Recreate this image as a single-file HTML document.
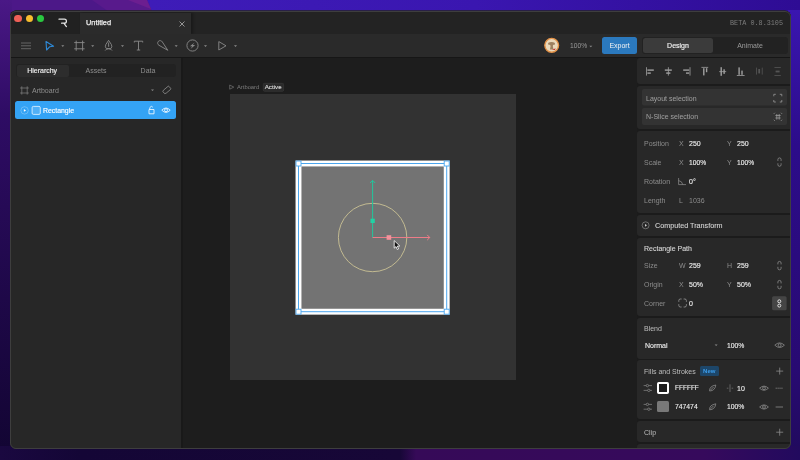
<!DOCTYPE html>
<html><head><meta charset="utf-8">
<style>
*{margin:0;padding:0;box-sizing:border-box}
html,body{width:800px;height:460px;overflow:hidden}
body{font-family:"Liberation Sans",sans-serif;font-size:7px;color:#d8d8d8;position:relative;background:#2a0c6a}
.a{position:absolute}
#wp{position:absolute;left:0;top:0;width:800px;height:460px}
#win{position:absolute;left:0;top:0;width:800px;height:460px;clip-path:inset(10.5px 9.2px 11.3px 10px round 6px)}
#rim{position:absolute;left:10px;top:10.5px;width:780.8px;height:438.2px;border-radius:6px;border:0.8px solid #3e3e3e;pointer-events:none}
.t{position:absolute;white-space:nowrap;line-height:1;will-change:transform}
.lbl{color:#8c8c8c}
.val{color:#f2f2f2;-webkit-text-stroke:0.1px #f2f2f2}
.md{-webkit-text-stroke:0.25px currentColor}
svg.i{position:absolute;overflow:visible}
</style></head><body>
<svg id="wp" width="800" height="460" viewBox="0 0 800 460">
<defs>
<linearGradient id="gl" x1="0" y1="0" x2="0" y2="1">
<stop offset="0" stop-color="#4a1886"/><stop offset="0.25" stop-color="#2e0c64"/><stop offset="0.65" stop-color="#1e0848"/><stop offset="1" stop-color="#120532"/>
</linearGradient>
<linearGradient id="gr" x1="0" y1="0" x2="0" y2="1">
<stop offset="0" stop-color="#3a16b0"/><stop offset="0.3" stop-color="#2c0c8a"/><stop offset="0.8" stop-color="#280a72"/><stop offset="1" stop-color="#200a5c"/>
</linearGradient>
<linearGradient id="gb" x1="0" y1="0" x2="1" y2="0">
<stop offset="0" stop-color="#1a0840"/><stop offset="0.1" stop-color="#140636"/><stop offset="0.5" stop-color="#170737"/><stop offset="0.52" stop-color="#360a58"/><stop offset="0.88" stop-color="#360a5c"/><stop offset="1" stop-color="#220a5e"/>
</linearGradient>
<linearGradient id="gt" x1="0" y1="0" x2="1" y2="0">
<stop offset="0" stop-color="#4c1888"/><stop offset="0.12" stop-color="#521890"/><stop offset="0.17" stop-color="#6a1c8c"/><stop offset="0.185" stop-color="#4a1cb0"/><stop offset="0.3" stop-color="#3c16b4"/><stop offset="1" stop-color="#3a14a8"/>
</linearGradient>
<linearGradient id="gtr" x1="0" y1="0" x2="1" y2="0"><stop offset="0" stop-color="#3e1cb8"/><stop offset="0.5" stop-color="#3a16b0"/><stop offset="1" stop-color="#2e0c94"/></linearGradient>
</defs>
<rect width="800" height="460" fill="#2c0c80"/>
<rect x="0" y="0" width="800" height="14" fill="#3c1ab4"/>
<rect x="150" y="0" width="650" height="14" fill="url(#gtr)"/>
<polygon points="0,0 147,0 153,14 0,14" fill="#4c1888"/>
<polygon points="92,0 147,0 153,14 112,14" fill="#581a8c"/>
<polygon points="128,0 147,0 151,9" fill="#6c1e90"/>
<rect x="0" y="0" width="12" height="460" fill="url(#gl)"/>
<rect x="788" y="10" width="12" height="450" fill="url(#gr)"/>
<rect x="0" y="446" width="800" height="14" fill="url(#gb)"/>
</svg>
<div id="win">
 <div class="a" style="left:0;top:0;width:800px;height:460px;background:#262626"></div>
 <!-- title bar -->
 <div class="a" style="left:10px;top:10px;width:781px;height:23.5px;background:#232323"></div>
 <div class="a" style="left:10px;top:10px;width:70px;height:23.5px;background:#212121"></div>
 <div class="a" style="left:79.7px;top:12.8px;width:111.5px;height:21.2px;background:#2b2b2b;box-shadow:1.5px 0 2px #1a1a1a"></div>
 <div class="a" style="left:14.3px;top:14.8px;width:7.6px;height:7.6px;border-radius:50%;background:#ee5f57"></div>
 <div class="a" style="left:25.5px;top:14.8px;width:7.6px;height:7.6px;border-radius:50%;background:#f7bd2e"></div>
 <div class="a" style="left:36.7px;top:14.8px;width:7.6px;height:7.6px;border-radius:50%;background:#2ac840"></div>
 <!-- R logo -->
 <svg class="i" style="left:58px;top:18px" width="10" height="10" viewBox="0 0 10 10"><path d="M1 1.2 H6.4 A2 2 0 0 1 6.4 5.2 H3.6 M5.8 5.2 L8.4 8.6" fill="none" stroke="#e4e4e4" stroke-width="1.25" stroke-linecap="round" stroke-linejoin="round"/></svg>
 <div class="t md" style="left:85.7px;top:19.2px;font-size:7.4px;color:#ededed">Untitled</div>
 <svg class="i" style="left:178.5px;top:20.5px" width="6" height="6" viewBox="0 0 6 6"><path d="M0.5 0.5 L5.5 5.5 M5.5 0.5 L0.5 5.5" stroke="#a0a0a0" stroke-width="0.9"/></svg>
 <div class="t" style="left:730px;top:19.5px;font-family:'Liberation Mono',monospace;font-size:6.8px;color:#7c7c7c">BETA 0.8.3105</div>
 <!-- toolbar -->
 <div class="a" style="left:10px;top:33.5px;width:781px;height:23px;background:#2a2a2a"></div>
 <div class="a" style="left:10px;top:56.8px;width:781px;height:1.6px;background:#161616"></div>

 <!-- toolbar icons -->
 <svg class="i" style="left:0;top:0" width="800" height="60" viewBox="0 0 800 60">
  <g stroke="#8a8a8a" stroke-width="0.9" fill="none">
   <path d="M21 43 H31 M21 45.8 H31 M21 48.7 H31" stroke="#7a7a7a" stroke-width="0.75"/>
   <path d="M76.2 40.6 V50.8 M82.6 40.6 V50.8 M74.2 42.6 H84.6 M74.2 48.8 H84.6"/>
   <path d="M108.6 40.3 L111.4 44.6 Q112.6 47 110.8 48.6 H106.4 Q104.6 47 105.8 44.6 Z M108.6 42.6 V45.6 M105.2 50.5 Q106 48.8 108.6 48.8 Q111.2 48.8 112 50.5"/><circle cx="108.6" cy="46" r="0.7" fill="#8a8a8a" stroke="none"/>
   <path d="M134.3 42.5 V41.2 H142.7 V42.5 M138.5 41.2 V50 M136.8 50 H140.2"/>
   <path d="M158.4 41.3 A2.5 2.5 0 0 1 162.3 41.9 L167.8 50.3 L159 45.3 A2.5 2.5 0 0 1 158.4 41.3 Z"/>
   <circle cx="192.5" cy="45.5" r="5.6"/>
   <path d="M218.8 41.6 L226 45.8 L218.8 50 Z"/>
  </g>
  <path d="M194.6 42.6 L189.9 46.3 H192.3 L190.5 48.9 L195.2 45.1 H192.7 Z" fill="#8a8a8a"/>
  <path d="M46 41.5 L53.6 46.2 L49.6 46.8 L46.6 50 Z" fill="none" stroke="#2e8ad8" stroke-width="1.1" stroke-linejoin="round"/>
  <g fill="#8a8a8a">
   <path d="M61.3 45.3 H64.3 L62.8 47 Z"/>
   <path d="M91.2 45.3 H94.2 L92.7 47 Z"/>
   <path d="M121 45.3 H124 L122.5 47 Z"/>
   <path d="M174.7 45.3 H177.7 L176.2 47 Z"/>
   <path d="M204 45.3 H207 L205.5 47 Z"/>
   <path d="M234 45.3 H237 L235.5 47 Z"/>
  </g>
 </svg>

 <!-- toolbar right -->
 <svg class="i" style="left:543px;top:37px" width="17" height="17" viewBox="0 0 17 17">
  <circle cx="8.7" cy="8.3" r="6.9" fill="#ead9bb" stroke="#e39248" stroke-width="1.4"/>
  <path d="M5 6 Q8.5 4 12 6 L11.5 8 Q10 7 9.8 9 L10.5 12.5 H7 L7.6 9 Q7 7 5.6 8 Z" fill="#8a6a4a" opacity="0.8"/>
  <path d="M9 13 L12.5 11.3 L12 13 Z" fill="#c03030"/>
 </svg>
 <div class="t" style="left:569.5px;top:42.8px;color:#9a9a9a;font-size:6.7px">100%</div>
 <svg class="i" style="left:589px;top:44.5px" width="4" height="3" viewBox="0 0 4 3"><path d="M0.3 0.8 H3.3 L1.8 2.3 Z" fill="#8a8a8a"/></svg>
 <div class="a" style="left:602px;top:37px;width:35px;height:16.5px;border-radius:2.5px;background:#2b79be"></div>
 <div class="t" style="left:602px;top:41.5px;width:35px;text-align:center;color:#f2f2f2">Export</div>
 <div class="a" style="left:642px;top:37px;width:146px;height:16.5px;border-radius:3px;background:#222"></div>
 <div class="a" style="left:643px;top:38px;width:70px;height:14.5px;border-radius:2.5px;background:#3b3b3b"></div>
 <div class="t" style="left:643px;top:41.5px;width:70px;text-align:center;color:#f0f0f0;-webkit-text-stroke:0.15px #f0f0f0">Design</div>
 <div class="t" style="left:714px;top:41.5px;width:72px;text-align:center;color:#9a9a9a">Animate</div>
 <!-- body -->
 <div class="a" style="left:10px;top:58.4px;width:171px;height:392px;background:#272727"></div>
 <div class="a" style="left:180.8px;top:58.4px;width:1.9px;height:392px;background:#191919"></div>
 <div class="a" style="left:182.7px;top:58.4px;width:455px;height:392px;background:#1d1d1d"></div>
 <div class="a" style="left:637px;top:58.4px;width:153px;height:392px;background:#1b1b1b"></div>


 <!-- canvas -->
 <div class="a" style="left:230px;top:94px;width:286px;height:286px;background:#323232"></div>
 <svg class="i" style="left:0;top:0" width="800" height="460" viewBox="0 0 800 460">
  <path d="M229.7 85 L233.8 87.1 L229.7 89.2 Z" fill="none" stroke="#7a7a7a" stroke-width="0.65" stroke-linejoin="round"/>
  <rect x="263.3" y="83.3" width="20.3" height="8" rx="1.2" fill="#2a2a2a" stroke="#3c3c3c" stroke-width="0.6"/>
  <rect x="298.5" y="163.5" width="148.2" height="148.2" fill="#737373" stroke="#ffffff" stroke-width="5.9"/>
  <rect x="298.5" y="163.5" width="148.2" height="148.2" fill="none" stroke="#4ba6ee" stroke-width="1"/>
  <g fill="#ffffff" stroke="#4ba6ee" stroke-width="0.9">
   <rect x="296" y="161" width="5" height="5"/>
   <rect x="444.2" y="161" width="5" height="5"/>
   <rect x="296" y="309.2" width="5" height="5"/>
   <rect x="444.2" y="309.2" width="5" height="5"/>
  </g>
  <circle cx="372.6" cy="237.5" r="34.2" fill="none" stroke="#d6cb98" stroke-width="0.8"/>
  <path d="M372.6 237.5 V180.5 M370 183 L372.6 180.4 L375.2 183" fill="none" stroke="#22c69c" stroke-width="1"/>
  <rect x="370.5" y="218.7" width="4.3" height="4.3" fill="#22d2a4"/>
  <path d="M372.6 237.5 H429.8 M427.2 234.9 L429.8 237.5 L427.2 240.1" fill="none" stroke="#ee7c88" stroke-width="1"/>
  <rect x="386.6" y="235.2" width="4.6" height="4.6" fill="#f4929c"/>
  <path d="M394.2 240.6 L394.2 248.2 L396 246.6 L397.3 249.5 L398.6 248.9 L397.3 246.1 L399.8 246 Z" fill="#111" stroke="#f4f4f4" stroke-width="0.9" stroke-linejoin="round"/>
 </svg>
 <div class="t" style="left:237.2px;top:85.1px;font-size:5.8px;color:#7c7c7c">Artboard</div>
 <div class="t" style="left:263.3px;top:84.4px;width:20.3px;text-align:center;font-size:6.2px;color:#d6d6d6;-webkit-text-stroke:0.15px #d6d6d6">Active</div>

 <!-- right panel -->
 <div class="a" style="left:637px;top:58.4px;width:154px;height:25.7px;background:#282828;border-radius:3px 0 0 3px"></div>
 <div class="a" style="left:637px;top:86.3px;width:154px;height:42.6px;background:#282828;border-radius:3px 0 0 3px"></div>
 <div class="a" style="left:637px;top:131px;width:154px;height:81.8px;background:#282828;border-radius:3px 0 0 3px"></div>
 <div class="a" style="left:637px;top:214.6px;width:154px;height:21.7px;background:#282828;border-radius:3px 0 0 3px"></div>
 <div class="a" style="left:637px;top:238px;width:154px;height:77.9px;background:#282828;border-radius:3px 0 0 3px"></div>
 <div class="a" style="left:637px;top:317.5px;width:154px;height:41.2px;background:#282828;border-radius:3px 0 0 3px"></div>
 <div class="a" style="left:637px;top:360.4px;width:154px;height:58.7px;background:#282828;border-radius:3px 0 0 3px"></div>
 <div class="a" style="left:637px;top:421.3px;width:154px;height:21.1px;background:#282828;border-radius:3px 0 0 3px"></div>
 <div class="a" style="left:637px;top:444px;width:154px;height:8.0px;background:#282828;border-radius:3px 0 0 3px"></div>

 <svg class="i" style="left:0;top:0" width="800" height="460" viewBox="0 0 800 460">
  <g fill="#a0a0a0">
   <rect x="646.1" y="67.2" width="0.8" height="8.4"/><rect x="647.4" y="69.4" width="6.4" height="1.4"/><rect x="647.4" y="72.4" width="3.4" height="1.4"/>
   <rect x="667.9" y="67.2" width="0.8" height="8.4"/><rect x="664.8" y="69.4" width="7" height="1.4"/><rect x="666.2" y="72.4" width="4.2" height="1.4"/>
   <rect x="689.6" y="67.2" width="0.8" height="8.4"/><rect x="683.2" y="69.4" width="6" height="1.4"/><rect x="686" y="72.4" width="3.2" height="1.4"/>
   <rect x="701.4" y="66.9" width="6.8" height="0.8"/><rect x="703.1" y="68.2" width="1.4" height="7.2"/><rect x="705.9" y="68.2" width="1.4" height="4"/>
   <rect x="719.2" y="71.3" width="7" height="0.8"/><rect x="720.5" y="67.2" width="1.4" height="8.6"/><rect x="723.4" y="69.3" width="1.4" height="4.6"/>
   <rect x="736.8" y="75" width="7.8" height="0.8"/><rect x="738.4" y="67.4" width="1.4" height="7.4"/><rect x="741.3" y="70.6" width="1.4" height="4.2"/>
  </g>
  <g fill="#555">
   <rect x="756" y="67.6" width="0.8" height="7"/><rect x="761.8" y="67.6" width="0.8" height="7"/><rect x="758.3" y="69" width="1.8" height="4.4"/>
   <rect x="774.4" y="67.2" width="6.4" height="0.8"/><rect x="774.4" y="75" width="6.4" height="0.8"/><rect x="775.6" y="70.6" width="4" height="1.8"/>
  </g>
  <rect x="642" y="89" width="145" height="16.5" rx="2" fill="#333"/>
  <rect x="642" y="108" width="145" height="17" rx="2" fill="#333"/>
  <g stroke="#9a9a9a" stroke-width="0.8" fill="none">
   <path d="M773.8 96.3 V94.3 H775.8 M779.8 94.3 H781.8 V96.3 M781.8 100 V102 H779.8 M775.8 102 H773.8 V100"/>
   <path d="M776.8 114 V119.6 M779.2 114 V119.6 M775.4 115.5 H780.6 M775.4 118 H780.6 M773.8 113.8 L774.8 112.8 M782 113.8 L781 112.8 M773.8 119.8 L774.8 120.8 M782 119.8 L781 120.8"/>
   <path d="M777.9 159.5 Q777.9 157.9 779.5 157.9 Q781.1 157.9 781.1 159.5 V160.9 M777.9 160.9 V159.5 M777.9 163.3 V164.7 Q777.9 166.3 779.5 166.3 Q781.1 166.3 781.1 164.7 V163.3" stroke-width="0.7"/>
   <path d="M777.9 263.0 Q777.9 261.4 779.5 261.4 Q781.1 261.4 781.1 263.0 V264.4 M777.9 264.4 V263.0 M777.9 266.8 V268.2 Q777.9 269.8 779.5 269.8 Q781.1 269.8 781.1 268.2 V266.8" stroke-width="0.7"/>
   <path d="M777.9 282.0 Q777.9 280.4 779.5 280.4 Q781.1 280.4 781.1 282.0 V283.4 M777.9 283.4 V282.0 M777.9 285.8 V287.2 Q777.9 288.8 779.5 288.8 Q781.1 288.8 781.1 287.2 V285.8" stroke-width="0.7"/>
   <path d="M678.6 178 V184.6 H686 M678.6 180.6 Q682 181 682.8 184.6" stroke-width="0.65"/>
   <path d="M678.8 301.8 V300.6 Q678.8 299 680.4 299 H681.6 M683.6 299 H684.8 Q686.4 299 686.4 300.6 V301.8 M686.4 304.2 V305.4 Q686.4 307 684.8 307 H683.6 M681.6 307 H680.4 Q678.8 307 678.8 305.4 V304.2"/>
  </g>
  <rect x="772.1" y="296.3" width="14.5" height="13.9" rx="1.5" fill="#454545"/>
  <g stroke="#eeeeee" stroke-width="0.9" fill="none"><circle cx="779.3" cy="301.3" r="1.5"/><circle cx="779.3" cy="305.6" r="1.5"/></g>
  <circle cx="645.6" cy="225.3" r="3.5" fill="none" stroke="#8a8a8a" stroke-width="0.7"/>
  <path d="M645 223.9 L647 225.3 L645 226.7 Z" fill="#d0d0d0"/>
 </svg>
 <div class="t" style="left:646px;top:94.5px;color:#a0a0a0">Layout selection</div>
 <div class="t" style="left:646px;top:113px;color:#a0a0a0">N-Slice selection</div>
 <div class="t lbl" style="left:643.8px;top:140px">Position</div>
 <div class="t lbl" style="left:678.8px;top:140px">X</div>
 <div class="t val" style="left:689px;top:140px">250</div>
 <div class="t lbl" style="left:726.8px;top:140px">Y</div>
 <div class="t val" style="left:737.2px;top:140px">250</div>
 <div class="t lbl" style="left:643.8px;top:159px">Scale</div>
 <div class="t lbl" style="left:678.8px;top:159px">X</div>
 <div class="t val" style="left:689px;top:159.7px;font-size:6.7px">100%</div>
 <div class="t lbl" style="left:726.8px;top:159px">Y</div>
 <div class="t val" style="left:737.2px;top:159.7px;font-size:6.7px">100%</div>
 <div class="t lbl" style="left:643.8px;top:178.2px">Rotation</div>
 <div class="t val" style="left:689px;top:178.2px">0°</div>
 <div class="t lbl" style="left:643.8px;top:197px">Length</div>
 <div class="t lbl" style="left:678.8px;top:197px">L</div>
 <div class="t lbl" style="left:689px;top:197px">1036</div>
 <div class="t" style="left:654.8px;top:222px;color:#d4d4d4;-webkit-text-stroke:0.1px #d4d4d4;font-size:7.2px">Computed Transform</div>
 <div class="t" style="left:643.8px;top:245.3px;color:#d4d4d4;-webkit-text-stroke:0.12px #d4d4d4;font-size:7px">Rectangle Path</div>
 <div class="t lbl" style="left:643.8px;top:262.4px">Size</div>
 <div class="t lbl" style="left:678.6px;top:262.4px">W</div>
 <div class="t val" style="left:689px;top:262.4px">259</div>
 <div class="t lbl" style="left:726.8px;top:262.4px">H</div>
 <div class="t val" style="left:737.2px;top:262.4px">259</div>
 <div class="t lbl" style="left:643.8px;top:281.4px">Origin</div>
 <div class="t lbl" style="left:678.8px;top:281.4px">X</div>
 <div class="t val" style="left:689px;top:281.4px">50%</div>
 <div class="t lbl" style="left:726.8px;top:281.4px">Y</div>
 <div class="t val" style="left:737.2px;top:281.4px">50%</div>
 <div class="t lbl" style="left:643.8px;top:299.8px">Corner</div>
 <div class="t val" style="left:689px;top:299.8px">0</div>
 <div class="t" style="left:643.8px;top:325.1px;color:#bdbdbd">Blend</div>
 <div class="t val" style="left:644.7px;top:341.6px">Normal</div>
 <div class="t val" style="left:726.8px;top:342.9px;font-size:6.8px">100%</div>
 <div class="t" style="left:643.6px;top:367.6px;color:#bdbdbd">Fills and Strokes</div>
 <div class="a" style="left:700.1px;top:366.3px;width:18.5px;height:9.7px;border-radius:1.5px;background:#1d4669"></div>
 <div class="t" style="left:700.1px;top:368.3px;width:18.5px;text-align:center;color:#3b9cea;font-weight:bold;font-size:6px">New</div>
 <div class="a" style="left:656.9px;top:381.8px;width:12.1px;height:12.2px;border-radius:1.8px;border:2.1px solid #fff;background:#1e1e1e"></div>
 <div class="a" style="left:656.9px;top:400.9px;width:12.1px;height:11.5px;border-radius:1.5px;background:#787878"></div>
 <div class="t val" style="left:674.5px;top:385px;font-size:6.5px">FFFFFF</div>
 <div class="t val" style="left:674.5px;top:404.3px;font-size:6.8px">747474</div>
 <div class="t val" style="left:737.1px;top:384.8px">10</div>
 <div class="t val" style="left:726.9px;top:404.3px;font-size:6.8px">100%</div>
 <div class="t" style="left:643.6px;top:428.7px;color:#bdbdbd">Clip</div>
 <svg class="i" style="left:0;top:0" width="800" height="460" viewBox="0 0 800 460">
  <g stroke="#8a8a8a" stroke-width="0.8" fill="none">
   <path d="M716 345.5 h0"/>
   <path d="M774.8 345.2 Q779.6 340.6 784.4 345.2 Q779.6 349.8 774.8 345.2 Z"/><circle cx="779.6" cy="345.2" r="1.5"/>
   <path d="M759.6 388.2 Q764 384 768.4 388.2 Q764 392.4 759.6 388.2 Z"/><circle cx="764" cy="388.2" r="1.4"/>
   <path d="M759.6 407 Q764 402.8 768.4 407 Q764 411.2 759.6 407 Z"/><circle cx="764" cy="407" r="1.4"/>
   <path d="M776.2 371.1 H783.2 M779.7 367.6 V374.6"/>
   <path d="M776.2 432.2 H783.2 M779.7 428.7 V435.7"/>
   <path d="M775.6 388.2 H783"  stroke-dasharray="1.3 0.6"/>
   <path d="M775.6 407 H783"/>
   <path d="M643.6 385.6 H652 M643.6 390.4 H652" stroke-width="0.7"/><circle cx="647.4" cy="385.6" r="1.2" fill="#282828" stroke-width="0.7"/><circle cx="648.8" cy="390.4" r="1.2" fill="#282828" stroke-width="0.7"/>
   <path d="M643.6 404.4 H652 M643.6 409.2 H652" stroke-width="0.7"/><circle cx="647.4" cy="404.4" r="1.2" fill="#282828" stroke-width="0.7"/><circle cx="648.8" cy="409.2" r="1.2" fill="#282828" stroke-width="0.7"/>
   <path d="M709.6 391 Q709.2 386.2 715.8 385 Q715 390.8 709.6 391 Z M710.6 390 L713.6 387"/>
   <path d="M709.6 409.8 Q709.2 405 715.8 403.8 Q715 409.6 709.6 409.8 Z M710.6 408.8 L713.6 405.8"/>
   <path d="M730 384.3 V392 M726.8 388.2 H728.4 M731.6 388.2 H733.2" stroke-width="0.6"/>
  </g>
  <path d="M714.6 344.5 H717.6 L716.1 346 Z" fill="#8a8a8a"/>
 </svg>
 <!-- left panel -->
 <div class="a" style="left:16.3px;top:64px;width:160px;height:13.3px;border-radius:3px;background:#222"></div>
 <div class="a" style="left:16.8px;top:64.6px;width:52px;height:12.1px;border-radius:2px;background:#2d2d2d"></div>
 <div class="t" style="left:16px;top:66.6px;width:52.3px;text-align:center;color:#eeeeee;-webkit-text-stroke:0.15px #eeeeee;font-size:7px">Hierarchy</div>
 <div class="t" style="left:69.6px;top:66.6px;width:52px;text-align:center;color:#8e8e8e">Assets</div>
 <div class="t" style="left:122px;top:66.6px;width:52px;text-align:center;color:#8e8e8e">Data</div>
 <svg class="i" style="left:0;top:0" width="190" height="125" viewBox="0 0 190 125">
  <g stroke="#8a8a8a" stroke-width="0.8" fill="none">
   <path d="M21.8 86.3 V94.6 M27.2 86.3 V94.6 M20.1 88 H28.8 M20.1 93 H28.8" stroke-width="0.65"/>
   <g transform="rotate(-40 166.8 90)"><path d="M162.8 88.6 L164.2 88 H170 Q170.8 88 170.8 88.7 V91.3 Q170.8 92 170 92 H164.2 L162.8 91.4 Z"/></g>
  </g>
  <path d="M151 89.5 H154 L152.5 91 Z" fill="#8a8a8a"/>
 </svg>
 <div class="t" style="left:32px;top:87px;color:#8e8e8e">Artboard</div>
 <div class="a" style="left:14.9px;top:101.3px;width:161.2px;height:17.3px;border-radius:2.5px;background:#34a3f5"></div>
 <svg class="i" style="left:0;top:0" width="190" height="125" viewBox="0 0 190 125">
  <circle cx="24.6" cy="110.4" r="3.7" fill="none" stroke="rgba(255,255,255,.4)" stroke-width="0.65"/>
  <path d="M23.9 109 L26 110.4 L23.9 111.8 Z" fill="#ffffff"/>
  <rect x="32.1" y="106.4" width="8.2" height="8" rx="1.3" fill="rgba(255,255,255,.15)" stroke="rgba(255,255,255,.8)" stroke-width="0.9"/>
  <g stroke="#ffffff" stroke-width="0.9" fill="none" opacity="0.9">
   <path d="M149 109.5 h5 v4.3 h-5 Z M149.8 109.5 V107.6 Q151.3 105.2 152.8 107.2"/>
   <path d="M161.8 110.2 Q166 105.8 170.2 110.2 Q166 114.6 161.8 110.2 Z"/>
   <circle cx="166" cy="110.2" r="1.5"/>
  </g>
 </svg>
 <div class="t" style="left:43.2px;top:107.9px;color:#ffffff;-webkit-text-stroke:0.15px #ffffff;font-size:6.9px">Rectangle</div>
</div>
<div id="rim"></div>
</body></html>
